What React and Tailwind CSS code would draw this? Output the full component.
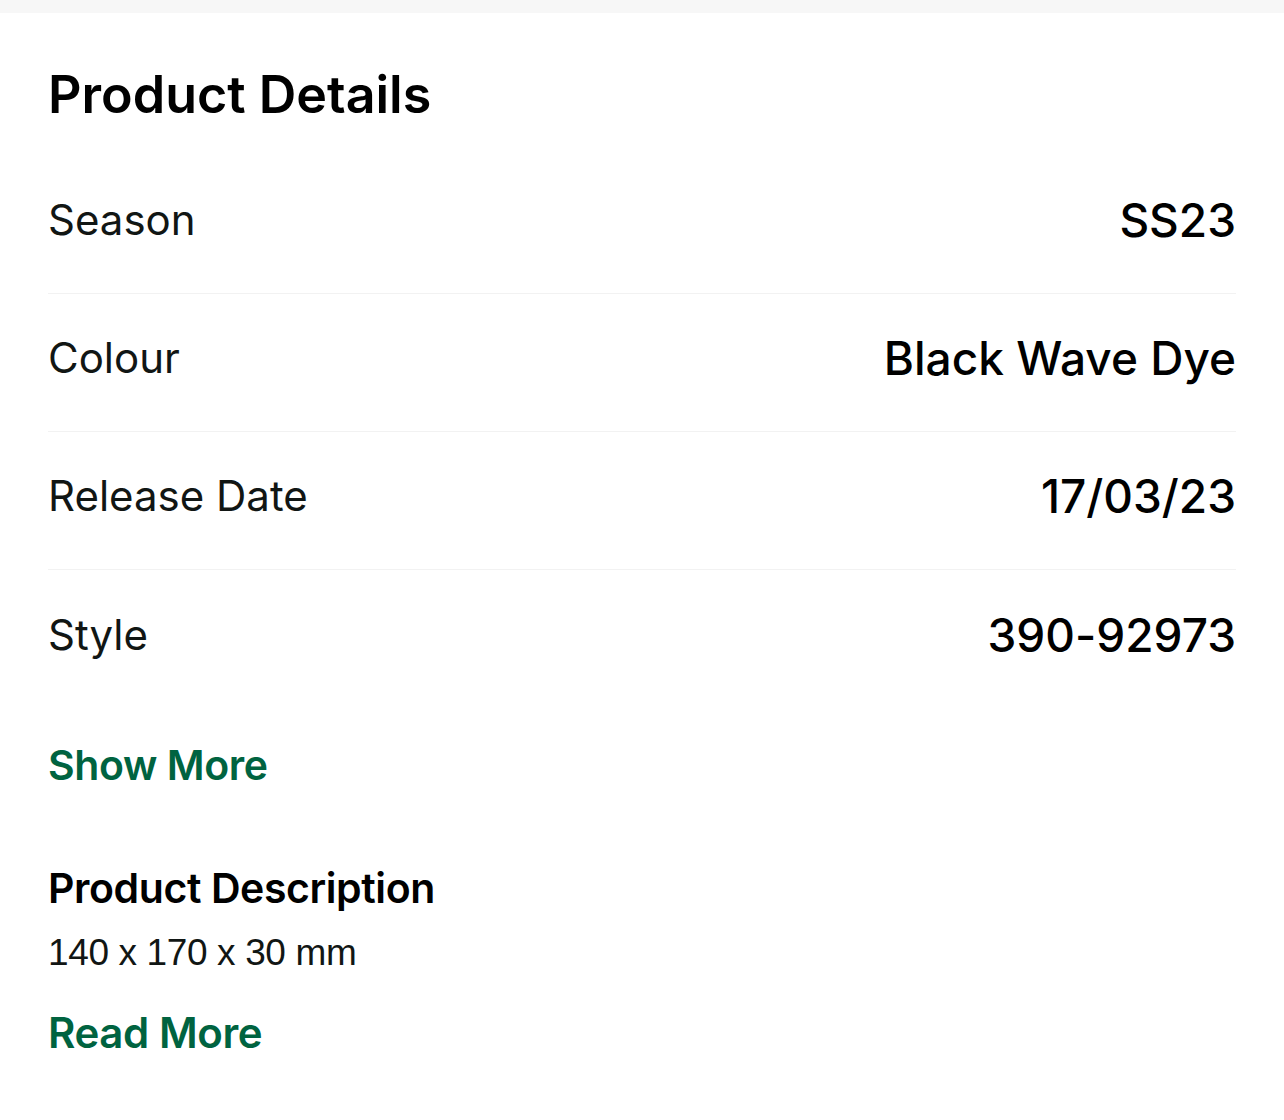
import React from 'react';

const details = [
    { label: 'Season', value: 'SS23' },
    { label: 'Colour', value: 'Black Wave Dye' },
    { label: 'Release Date', value: '17/03/23' },
    { label: 'Style', value: '390-92973' },
];

const DetailRow = ({ label, value, last }) => (
    <div className={`flex h-[138px] items-center justify-between pb-[9px] ${last ? '' : 'border-b border-[#f2f2f2]'}`}>
        <span className="text-[42px] leading-none text-[#111614]">{label}</span>
        <span className="text-[46px] font-medium leading-none text-black">{value}</span>
    </div>
);

const App = () => {
    return (
        <div className="min-h-screen bg-white font-['Inter',sans-serif] [font-feature-settings:'calt'_0]">
            <div className="h-[13px] bg-[#f7f7f7]" />
            <div className="px-12">
                <h2 className="pt-[56px] text-[52px] font-semibold leading-none text-black">
                    Product Details
                </h2>

                <div className="mt-[35px]">
                    {details.map((d, i) => (
                        <DetailRow key={d.label} label={d.label} value={d.value} last={i === details.length - 1} />
                    ))}
                </div>

                <button className="mt-[37px] block text-[41px] font-semibold leading-none tracking-[-0.01em] text-[#006340]">
                    Show More
                </button>

                <h3 className="mt-[82px] text-[41px] font-semibold leading-none tracking-[-0.01em] text-black">
                    Product Description
                </h3>
                <p className="mt-[25px] font-['Liberation_Sans',sans-serif] text-[37px] leading-none tracking-[-0.01em] text-[#111614]">
                    140 x 170 x 30 mm
                </p>

                <button className="mt-[41px] block text-[42px] font-semibold leading-none tracking-[-0.01em] text-[#006340]">
                    Read More
                </button>
            </div>
        </div>
    );
};

export default App;
